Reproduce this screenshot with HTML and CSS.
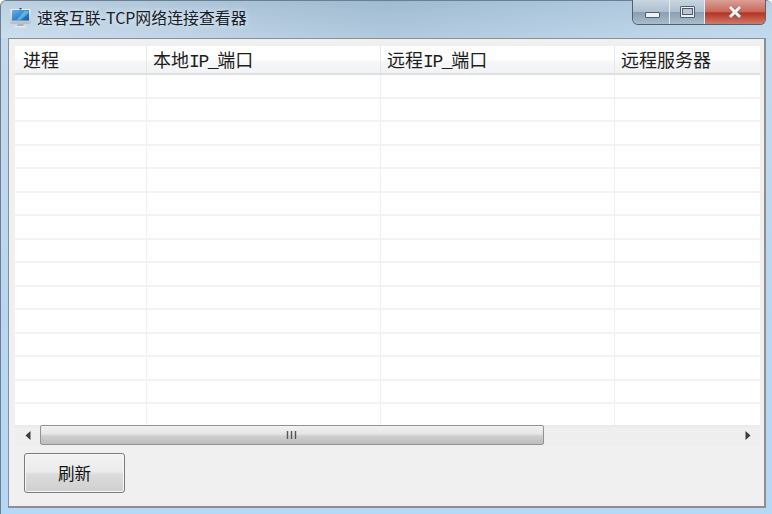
FILE: index.html
```html
<!DOCTYPE html>
<html lang="zh">
<head>
<meta charset="utf-8">
<title>速客互联-TCP网络连接查看器</title>
<link rel="stylesheet" href="styles.css">
</head>
<body>
<div class="window">
  <div class="titlebar">
    <svg class="appicon" width="22" height="22" viewBox="0 0 22 22">
      <defs><linearGradient id="scr" x1="0" y1="0" x2="1" y2="1"><stop offset="0" stop-color="#5fb4ee"/><stop offset="1" stop-color="#0e5ea8"/></linearGradient>
      <linearGradient id="bz" x1="0" y1="0" x2="0" y2="1"><stop offset="0" stop-color="#eef1f4"/><stop offset="1" stop-color="#b4bcc6"/></linearGradient></defs>
      <rect x="0.5" y="2" width="20" height="15" rx="1" fill="url(#bz)"/>
      <rect x="2" y="3" width="17" height="10.5" fill="url(#scr)"/>
      <path d="M6.5 13 L14.5 4 L18.5 4 L18.5 6 L10.5 13Z" fill="#8fd0f5" opacity=".55"/>
      <rect x="7.5" y="17" width="6" height="2" fill="#aab2bb"/>
      <rect x="5" y="19" width="11" height="1.6" fill="#e4e7ea"/>
      <rect x="9.5" y="1" width="2" height="1.5" fill="#39424c"/>
    </svg>
    <span class="title">速客互联-TCP网络连接查看器</span>
    <div class="caption">
      <div class="capbtn min"><span class="minglyph"></span></div>
      <div class="capbtn max"><span class="maxglyph"></span></div>
      <div class="capbtn close">
        <svg width="16" height="12" viewBox="0 0 16 12"><path d="M3 1 L13 11 M13 1 L3 11" stroke="#5d636b" stroke-width="4.4" fill="none" opacity=".55"/><path d="M3 1 L13 11 M13 1 L3 11" stroke="#f4f4f4" stroke-width="3" fill="none"/></svg>
      </div>
    </div>
  </div>
  <div class="client">
    <div class="list">
      <div class="row head">
        <div class="cell c1">进程</div>
        <div class="cell c2">本地<span class="lat">IP_</span>端口</div>
        <div class="cell c3">远程<span class="lat">IP_</span>端口</div>
        <div class="cell c4">远程服务器</div>
      </div>
      <div class="row"><div class="cell c1"></div><div class="cell c2"></div><div class="cell c3"></div><div class="cell c4"></div></div>
      <div class="row"><div class="cell c1"></div><div class="cell c2"></div><div class="cell c3"></div><div class="cell c4"></div></div>
      <div class="row"><div class="cell c1"></div><div class="cell c2"></div><div class="cell c3"></div><div class="cell c4"></div></div>
      <div class="row"><div class="cell c1"></div><div class="cell c2"></div><div class="cell c3"></div><div class="cell c4"></div></div>
      <div class="row"><div class="cell c1"></div><div class="cell c2"></div><div class="cell c3"></div><div class="cell c4"></div></div>
      <div class="row"><div class="cell c1"></div><div class="cell c2"></div><div class="cell c3"></div><div class="cell c4"></div></div>
      <div class="row"><div class="cell c1"></div><div class="cell c2"></div><div class="cell c3"></div><div class="cell c4"></div></div>
      <div class="row"><div class="cell c1"></div><div class="cell c2"></div><div class="cell c3"></div><div class="cell c4"></div></div>
      <div class="row"><div class="cell c1"></div><div class="cell c2"></div><div class="cell c3"></div><div class="cell c4"></div></div>
      <div class="row"><div class="cell c1"></div><div class="cell c2"></div><div class="cell c3"></div><div class="cell c4"></div></div>
      <div class="row"><div class="cell c1"></div><div class="cell c2"></div><div class="cell c3"></div><div class="cell c4"></div></div>
      <div class="row"><div class="cell c1"></div><div class="cell c2"></div><div class="cell c3"></div><div class="cell c4"></div></div>
      <div class="row"><div class="cell c1"></div><div class="cell c2"></div><div class="cell c3"></div><div class="cell c4"></div></div>
      <div class="row"><div class="cell c1"></div><div class="cell c2"></div><div class="cell c3"></div><div class="cell c4"></div></div>
      <div class="row last"><div class="cell c1"></div><div class="cell c2"></div><div class="cell c3"></div><div class="cell c4"></div></div>
      <div class="scrollbar">
        <div class="arrow"><svg width="6" height="9" viewBox="0 0 6 9"><path d="M5.5 0 L0.5 4.5 L5.5 9Z" fill="#3c3c3c"/></svg></div>
        <div class="track">
          <div class="thumb"><svg width="11" height="8" viewBox="0 0 11 8"><path d="M1.5 0V8M5.5 0V8M9.5 0V8" stroke="#555" stroke-width="1.4"/></svg></div>
        </div>
        <div class="arrow"><svg width="6" height="9" viewBox="0 0 6 9"><path d="M0.5 0 L5.5 4.5 L0.5 9Z" fill="#3c3c3c"/></svg></div>
      </div>
    </div>
    <div class="btnrow"><button class="btn">刷新</button></div>
  </div>
</div>
</body>
</html>
```
FILE: styles.css
```css
* { box-sizing: border-box; }
html, body { margin: 0; padding: 0; }
body { width: 772px; height: 514px; overflow: hidden; font-family: "Noto Sans CJK SC", "Liberation Sans", sans-serif; }
.window {
  width: 772px; height: 514px; display: flex; flex-direction: column;
  background: linear-gradient(180deg, #a9c3d8 0%, #c3d9ec 8%, #b9d6f0 60%, #b5d8f6 100%);
  border: 1px solid #6b7f91; border-radius: 6px 6px 0 0; border-bottom: none; border-right: none;
}
.titlebar { height: 37px; display: flex; align-items: flex-start; padding: 6px 0 0 9px; gap: 5px; flex: none;
  background: linear-gradient(90deg, rgba(240,246,250,.25), rgba(120,150,175,.2) 50%, rgba(200,225,245,.4)); }
.appicon { flex: none; }
.title { font-size: 15.9px; line-height: 22px; color: #15202b; white-space: nowrap; text-shadow: 0 0 6px rgba(255,255,255,.9); }
.caption { margin-left: auto; margin-top: -7px; margin-right: 6px; display: flex; height: 25px; border: 1px solid #56606b; border-top: none; border-radius: 0 0 6px 6px; overflow: hidden; }
.capbtn { display: flex; align-items: center; justify-content: center; height: 100%; }
.min, .max { background: linear-gradient(180deg, #c9d6e2 0%, #aebfd0 48%, #8a9fb4 52%, #a9bccd 100%); border-right: 1px solid #e4ecf3; }
.min { width: 37px; align-items: flex-end; padding: 0 0 6px 2px; }
.max { width: 35px; padding-bottom: 1px; }
.close { width: 60px; background: linear-gradient(180deg, #dba096 0%, #c8695a 48%, #b53324 54%, #cf7a68 100%); }
.minglyph { width: 15px; height: 6px; background: #eef2f6; border: 1px solid #4f5c69; border-radius: 1px; }
.maxglyph { width: 15px; height: 12px; border: 1px solid #4f5c69; border-radius: 1px; background: #eef2f6; display: flex; align-items: center; justify-content: center; padding: 2px; }
.maxglyph::after { content: ""; width: 9px; height: 5px; background: #b9c6d2; border: 1px solid #4f5c69; flex: none; }
.client {
  width: 758px; height: 470px; margin-left: 7px; flex: none;
  background: #f0f0f0; border: 1px solid #8a8f94; border-bottom-width: 2px; border-right-width: 2px;
  padding: 7px 5px 0 6px; display: flex; flex-direction: column;
}
.list { width: 745px; flex: none; background: #fff; }
.row { display: flex; height: 23.5px; }
.row.last { height: 21px; }
.cell { border-right: 1px solid #f0f0f0; border-bottom: 2px solid #f3f3f3; height: 100%; flex: none; }
.row.last .cell { border-bottom: none; }
.c1 { width: 132px; padding-left: 8px; }
.c2 { width: 234px; padding-left: 6px; }
.c3 { width: 234px; padding-left: 6px; }
.c4 { width: 145px; padding-left: 6px; border-right: none; }
.head { height: 29px; background: linear-gradient(180deg, #fff 0%, #fff 45%, #f6f7f8 55%, #f1f2f3 100%); }
.head .cell { font-size: 18px; line-height: 27px; color: #1d1d1d; border-bottom: 2px solid #dfe0e1; border-right-color: #e6e7e8; white-space: nowrap; }
.lat { font-family: "Liberation Mono", monospace; letter-spacing: -1.4px; }
.scrollbar { height: 20px; display: flex; align-items: center; background: linear-gradient(180deg, #e9e9e9, #efefef 20%, #eeeeee 100%); }
.arrow { width: 25px; flex: none; display: flex; align-items: center; justify-content: center; height: 100%; }
.track { flex: 1; height: 100%; display: flex; }
.thumb { width: 504px; height: 100%; display: flex; align-items: center; justify-content: center; padding-right: 2px; border: 1px solid #8f9296; border-radius: 2px;
  background: linear-gradient(180deg, #f2f2f2 0%, #e4e4e4 45%, #cfcfcf 55%, #bdbdbd 100%); }
.btnrow { padding: 8px 0 0 9px; }
.btn {
  width: 101px; height: 40px; display: block; font: inherit; font-size: 16.6px; color: #111; padding: 0;
  border: 1px solid #777b80; border-radius: 3px; box-shadow: inset 0 0 0 1px #f8f8f8;
  background: linear-gradient(180deg, #f2f2f2 0%, #ebebeb 47%, #dcdcdc 53%, #cfcfcf 100%);
}
```
